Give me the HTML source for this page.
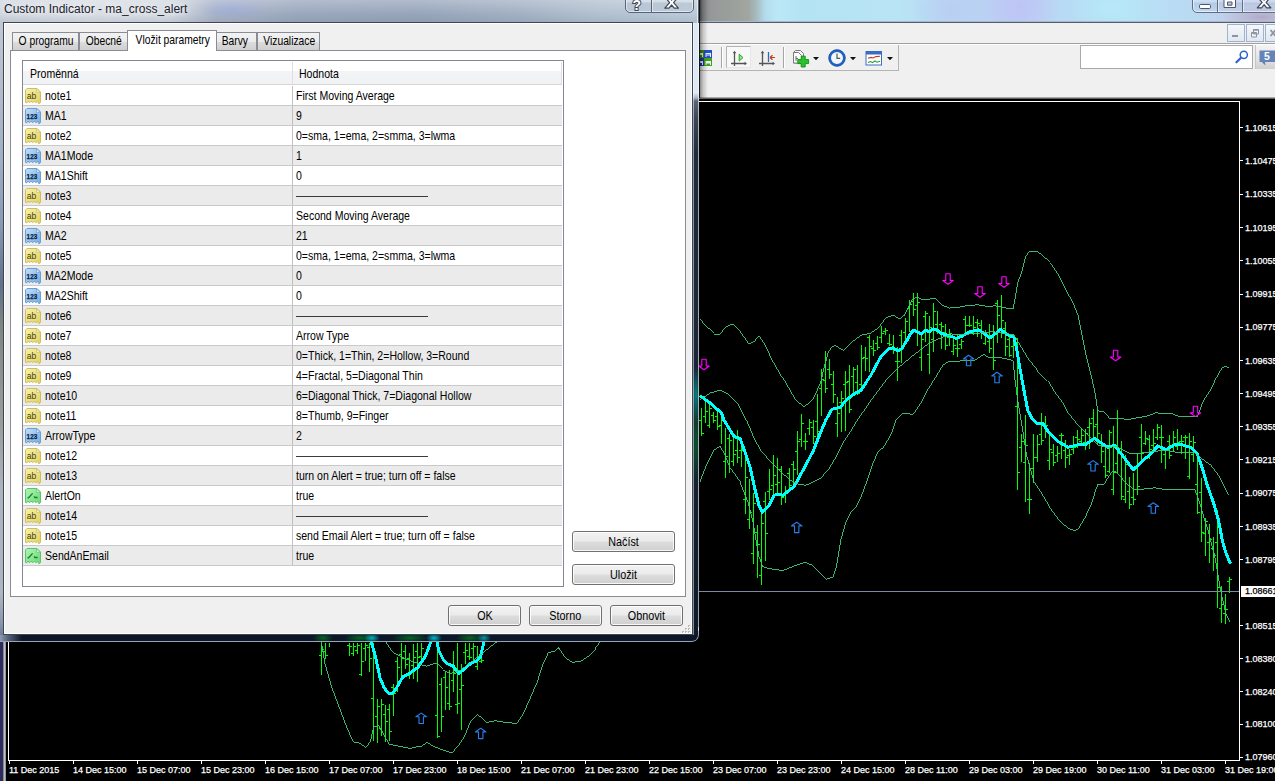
<!DOCTYPE html>
<html><head><meta charset="utf-8"><title>Custom Indicator - ma_cross_alert</title>
<style>
html,body{margin:0;padding:0;background:#000;}
html{overflow:hidden;width:1275px;height:781px;}
#root{position:absolute;left:0;top:0;width:1275px;height:781px;overflow:hidden;background:#000;}
body{width:1275px;height:781px;position:relative;overflow:hidden;font-family:"Liberation Sans",sans-serif;font-size:11px;color:#000;}
.abs{position:absolute;}
.t{display:inline-block;font-size:12.4px;transform:scaleX(.85);transform-origin:0 50%;white-space:nowrap;letter-spacing:0;}
.tb{display:inline-block;font-size:12.4px;transform:scaleX(.87);transform-origin:50% 50%;white-space:nowrap;letter-spacing:0;}
.tc{display:inline-block;font-size:12.4px;transform:scaleX(.83);transform-origin:50% 50%;white-space:nowrap;letter-spacing:0;}
/* ---- main window chrome ---- */
#glass{left:0;top:0;width:1275px;height:22px;background:
 radial-gradient(ellipse 45px 12px at 1262px 17px,rgba(176,166,196,.9),rgba(176,166,196,0) 90%),
 radial-gradient(ellipse 50px 40px at 1020px 6px,rgba(190,196,246,.9),rgba(190,196,246,0) 80%),
 radial-gradient(ellipse 50px 40px at 950px 10px,rgba(186,204,242,.8),rgba(186,204,242,0) 80%),
 radial-gradient(ellipse 50px 30px at 1110px 8px,rgba(182,234,248,.9),rgba(182,234,248,0) 80%),
 linear-gradient(90deg,#5e5e5e 699px,#868989 702px,#969999 712px,#9a9f9b 730px,#a2a5a0 748px,#a8bcc2 757px,#b2dcec 765px,#bbe8f7 778px,#b4e3f4 800px,#b9e4f5 900px,#b8d6f3 960px,#bccdf3 1020px,#b8daf4 1060px,#b7e2f6 1130px,#badaf4 1190px,#c2cfea 1230px,#c6d0e8 1275px);}
#glassline{left:0;top:21px;width:1275px;height:2px;background:linear-gradient(#a6b8cc 0,#a6b8cc 1px,#565d6b 1px,#565d6b 2px);}
#menubar{left:0;top:23px;width:1275px;height:20px;background:#f0f0f0;}
#tbarea{left:0;top:43px;width:1275px;height:54px;background:#f0f0f0;border-top:1px solid #a0a0a0;box-sizing:border-box;box-shadow:inset 0 1px 0 #fff;}
#tbline{left:699px;top:70px;width:200px;height:1px;background:#b5b5b5;}
#tbline2{left:898px;top:45px;width:1px;height:26px;background:#b5b5b5;}
#underbar{left:0;top:97px;width:1275px;height:2px;background:linear-gradient(#cfcfcf,#3a3a3a);}
#chartbg{left:0;top:99px;width:1275px;height:682px;background:#000;}
.chart{position:absolute;left:0;top:0;}
.pl{position:absolute;left:1245px;color:#fff;-webkit-text-stroke:.25px #fff;font-size:9px;line-height:12px;height:12px;white-space:nowrap;}
.dl{position:absolute;top:764px;color:#fff;-webkit-text-stroke:.25px #fff;font-size:9px;line-height:12px;white-space:nowrap;}
#bid{left:1241px;top:586px;width:34px;height:11px;background:#fff;color:#000;-webkit-text-stroke:.25px #000;font-size:9px;line-height:11px;padding-left:4px;box-sizing:border-box;white-space:nowrap;overflow:hidden;}
#lframe{left:0;top:99px;width:6px;height:682px;background:linear-gradient(90deg,#2c2c60 0,#2c2c60 3px,#8a8a8a 3.5px,#d8d8d8 5px,#555 6px);}
#dshadow{left:699px;top:0;width:9px;height:98px;background:linear-gradient(90deg,#161616 0,#161616 1px,rgba(0,0,0,.42) 1px,rgba(0,0,0,.18) 4px,rgba(0,0,0,0) 9px);}
/* caption buttons main */
#capbtn{left:1192px;top:-7px;width:100px;height:18px;border:1px solid #5e6f86;border-radius:0 0 5px 5px;box-shadow:inset 0 0 0 1px rgba(255,255,255,.55);background:linear-gradient(rgba(255,255,255,.45),rgba(255,255,255,.15) 45%,rgba(150,170,200,.25) 50%,rgba(200,215,235,.3));}
#capbtn i{position:absolute;top:0;width:1px;height:18px;background:#5e6f86;box-shadow:1px 0 0 rgba(255,255,255,.5);}
.mdi{position:absolute;top:24px;width:18px;height:18px;border:1px solid #9fb3cf;background:linear-gradient(#f4f7fb,#e1e8f2);box-sizing:border-box;}
#sbtn{left:1255px;top:45px;width:20px;height:24px;background:linear-gradient(#f4f4f4,#e2e2e2 60%,#cfcfcf);border-left:1px solid #c5c5c5;}
#search{left:1080px;top:45px;width:173px;height:24px;border:1px solid #a9a9a9;background:#fff;box-sizing:border-box;}
/* ---- dialog ---- */
#dlg{left:0;top:0;width:699px;height:642px;border-radius:0 0 7px 0;overflow:hidden;
 background:
 linear-gradient(90deg,rgba(0,0,0,0) 0,rgba(0,0,0,0) 100%),
 linear-gradient(#0b1626,#0b1626);}
#dtitle{left:0;top:0;width:699px;height:23px;background:
 radial-gradient(ellipse 45px 14px at 232px 8px,rgba(150,165,215,.7),rgba(150,165,215,0) 80%),
 linear-gradient(90deg,#cfd6df 0,#d9dee5 90px,#d3d9e2 170px,#aab5c8 215px,#9aa7bd 300px,#97a5bb 420px,#a3b1c4 520px,#b3c1d0 600px,#bccbd9 699px);}
#dtedge{left:697px;top:0;width:2px;height:23px;background:linear-gradient(90deg,#e4eaf1 0,#e4eaf1 1px,#596373 1px,#596373 2px);}
#dtitle:after{content:"";position:absolute;left:0;top:0;width:699px;height:23px;background:linear-gradient(rgba(255,255,255,.25),rgba(255,255,255,0) 60%,rgba(90,100,120,.15));}
#dtext{left:4px;top:2px;font-size:12px;line-height:15px;white-space:nowrap;color:#1c222c;text-shadow:0 0 6px rgba(255,255,255,.9),0 0 9px rgba(255,255,255,.8);letter-spacing:0px;}
#dleft{left:0;top:23px;width:3px;height:619px;background:linear-gradient(#bfc8d4 0,#b4bdca 60px,#a0adc2 140px,#8a9ab5 200px,#62708a 262px,#7d857f 300px,#8c9088 340px,#9a9c9a 400px,#aeb4be 470px,#b0b6c0 570px,#8a96aa 600px,#6f7f98 612px);}
#dright{left:693px;top:23px;width:6px;height:612px;background:
 radial-gradient(ellipse 5px 28px at 3px 372px,rgba(0,170,160,.7),rgba(0,170,160,0)),
 radial-gradient(ellipse 5px 40px at 3px 420px,rgba(0,120,40,.6),rgba(0,120,40,0)),
 linear-gradient(#dfe9f5 0,#dfe8f5 70px,#a9b3c2 75px,#5b6678 78px,#3b4759 95px,#1f2c3c 130px,#1a2838 300px,#0d1a2a 612px);box-shadow:inset 1px 0 0 rgba(255,255,255,.5);}
#drl{left:698px;top:23px;width:1px;height:608px;background:rgba(255,255,255,.6);}
#dbl{left:0;top:641px;width:688px;height:1px;background:#9aa3b3;}
#dcorner{left:684px;top:627px;width:15px;height:15px;box-sizing:border-box;border-right:1px solid rgba(255,255,255,.6);border-bottom:1px solid #9aa3b3;border-radius:0 0 7px 0;}
#dbot{left:0;top:635px;width:699px;height:7px;background:
 radial-gradient(ellipse 8px 5px at 372px 3px,rgba(0,205,220,.85),rgba(0,205,220,0)),
 radial-gradient(ellipse 8px 5px at 434px 3px,rgba(0,205,220,.9),rgba(0,205,220,0)),
 radial-gradient(ellipse 7px 5px at 484px 3px,rgba(0,205,220,.7),rgba(0,205,220,0)),
 radial-gradient(ellipse 10px 5px at 323px 3px,rgba(0,150,30,.6),rgba(0,150,30,0)),
 radial-gradient(ellipse 16px 5px at 360px 3px,rgba(0,150,30,.6),rgba(0,150,30,0)),
 radial-gradient(ellipse 18px 5px at 410px 3px,rgba(0,150,30,.6),rgba(0,150,30,0)),
 radial-gradient(ellipse 14px 5px at 470px 3px,rgba(0,150,30,.6),rgba(0,150,30,0)),
 linear-gradient(90deg,#8f9bb0 0,#55627a 8px,#0c1828 22px,#0c1828 100%);
}
#client{left:3px;top:22px;width:690px;height:613px;box-sizing:border-box;border:1px solid #3d4656;background:#f0f0f0;box-shadow:inset 0 0 0 1px #fff;}
#dcap{left:625px;top:-7px;width:67px;height:18px;border:1px solid #56637a;border-radius:0 0 5px 5px;box-shadow:inset 0 0 0 1px rgba(255,255,255,.55);background:linear-gradient(rgba(255,255,255,.5),rgba(255,255,255,.2) 45%,rgba(140,155,180,.2) 50%,rgba(190,200,220,.25));}
#dcap i{position:absolute;left:25px;top:0;width:1px;height:18px;background:#56637a;box-shadow:1px 0 0 rgba(255,255,255,.5);}
/* tabs */
.tab{position:absolute;top:32px;height:18px;box-sizing:border-box;border:1px solid #898c95;border-bottom:none;background:linear-gradient(#f2f2f2 0,#ebebeb 50%,#dddddd 50%,#cfcfcf 100%);line-height:17px;text-align:center;white-space:nowrap;}
.tab.act{top:30px;height:21px;background:#fff;line-height:19px;z-index:2;}
#panel{left:10px;top:50px;width:676px;height:547px;box-sizing:border-box;border:1px solid #898c95;background:#fff;}
#list{left:22px;top:60px;width:542px;height:527px;box-sizing:border-box;border:1px solid #828790;background:#fff;overflow:hidden;}
#hdr{position:absolute;left:0;top:0;width:539px;height:23px;background:linear-gradient(#fff 0,#fff 10px,#f3f4f6 10px,#f1f2f4 23px);border-bottom:1px solid #d5d5d5;}
#hdr span{position:absolute;top:6px;line-height:15px;}
#hdr i{position:absolute;left:269px;top:1px;width:1px;height:22px;background:#dedfe1;}
#hdr b{position:absolute;left:538px;top:1px;width:1px;height:22px;background:#dedfe1;}
.row{position:absolute;left:0;width:539px;height:19px;border-bottom:1px solid #c9c9c9;background:#fff;}
.row.g{background:#ebebeb;}
.row .ic{position:absolute;left:2px;top:2px;}
.row .nm{position:absolute;left:21.5px;top:3px;line-height:15px;}
.row .vl{position:absolute;left:272.5px;top:3px;line-height:15px;}
.row .dv{position:absolute;left:269px;top:0;width:1px;height:19px;background:#c0c0c0;}
.dash{position:absolute;left:273px;top:10px;width:132px;height:1px;background:#3c3c3c;}
.btn{position:absolute;box-sizing:border-box;border:1px solid #707070;border-radius:3px;background:linear-gradient(#f2f2f2 0,#ebebeb 48%,#dddddd 52%,#cfcfcf 100%);box-shadow:inset 0 0 0 1px rgba(255,255,255,.85);text-align:center;line-height:21px;height:21px;font-size:11px;}
</style></head>
<body>
<div id="root">
<svg width="0" height="0" style="position:absolute">
<defs>
<linearGradient id="gy" x1="0" y1="0" x2="1" y2="1"><stop offset="0" stop-color="#f8f3ae"/><stop offset="1" stop-color="#e0d062"/></linearGradient>
<linearGradient id="gb" x1="0" y1="0" x2="1" y2="1"><stop offset="0" stop-color="#c2e0f9"/><stop offset="1" stop-color="#70aae0"/></linearGradient>
<linearGradient id="gg" x1="0" y1="0" x2="1" y2="1"><stop offset="0" stop-color="#b2f6b8"/><stop offset="1" stop-color="#66d874"/></linearGradient>
<symbol id="paper" viewBox="0 0 16 16"><path d="M2,0.5 H12 L15.5,4 V14.6 L14,15.8 L12.4,13.2 L10.9,14.8 L9.3,13 L7.7,14.8 L6.1,13 L4.5,14.8 L3,13 L1.6,15 L0.5,14.4 V2 Z"/></symbol>
<symbol id="i-ab" viewBox="0 0 16 16"><use href="#paper" fill="url(#gy)" stroke="#cdbf60" stroke-width="1"/><path d="M11.6,0.8 V4.4 H15.2 Z" fill="#fcf9d4" stroke="#cdbf60" stroke-width=".7"/><text x="1.8" y="10.7" font-family="Liberation Sans, sans-serif" font-size="9" fill="#453f00" textLength="9.6" lengthAdjust="spacingAndGlyphs">ab</text></symbol>
<symbol id="i-n" viewBox="0 0 16 16"><use href="#paper" fill="url(#gb)" stroke="#6a9ed4" stroke-width="1"/><path d="M11.6,0.8 V4.4 H15.2 Z" fill="#def0fd" stroke="#6a9ed4" stroke-width=".7"/><text x="1.6" y="10.9" font-family="Liberation Sans, sans-serif" font-size="7.2" font-weight="bold" fill="#0b2447" stroke="#0b2447" stroke-width=".25" textLength="10.6" lengthAdjust="spacingAndGlyphs">123</text></symbol>
<symbol id="i-b" viewBox="0 0 16 16"><use href="#paper" fill="url(#gg)" stroke="#5cc468" stroke-width="1"/><path d="M11.6,0.8 V4.4 H15.2 Z" fill="#dcfbe0" stroke="#5cc468" stroke-width=".7"/><path d="M2.4,9.8 H3.6 L7.6,5.4 M9,8.4 L10,9.5 H12.6" stroke="#14802a" stroke-width="1.3" fill="none" stroke-linejoin="round"/></symbol>
</defs></svg>

<!-- main window chrome -->
<div id="glass" class="abs"></div>
<div id="glassline" class="abs"></div>
<div id="capbtn" class="abs"><i style="left:24px"></i><i style="left:49px"></i></div>
<div id="menubar" class="abs"></div>
<div id="tbarea" class="abs"></div>
<div id="tbline" class="abs"></div><div id="tbline2" class="abs"></div>
<div id="underbar" class="abs"></div>
<div id="chartbg" class="abs"></div>
<svg class="chart" width="1275" height="781" viewBox="0 0 1275 781">
<path d="M321.5,643 V675 M321,655.5 h-2 M322,649.5 h2 M325.5,643 V659 M325,651.5 h-2 M326,655.5 h2 M329.5,643 V647 M349.5,643 V656 M349,645.5 h-2 M350,646.5 h2 M353.5,643 V656 M353,653.5 h-2 M354,646.5 h2 M357.5,643 V654 M357,650.5 h-2 M358,645.5 h2 M361.5,643 V676 M361,674.5 h-2 M362,661.5 h2 M365.5,643 V661 M365,648.5 h-2 M366,645.5 h2 M369.5,643 V672 M369,647.5 h-2 M370,658.5 h2 M373.5,643 V741 M373,698.5 h-2 M374,653.5 h2 M377.5,699 V743 M377,716.5 h-2 M378,706.5 h2 M381.5,699 V736 M381,728.5 h-2 M382,704.5 h2 M385.5,705 V742 M385,714.5 h-2 M386,721.5 h2 M389.5,704 V741 M389,709.5 h-2 M390,731.5 h2 M393.5,684 V716 M393,687.5 h-2 M394,693.5 h2 M397.5,657 V692 M397,661.5 h-2 M398,667.5 h2 M401.5,643 V677 M401,654.5 h-2 M402,658.5 h2 M405.5,645 V669 M405,651.5 h-2 M406,664.5 h2 M409.5,653 V679 M409,658.5 h-2 M410,673.5 h2 M413.5,644 V679 M413,665.5 h-2 M414,657.5 h2 M417.5,643 V682 M417,651.5 h-2 M418,657.5 h2 M421.5,643 V664 M421,656.5 h-2 M422,648.5 h2 M437.5,643 V738 M437,715.5 h-2 M438,736.5 h2 M441.5,678 V732 M441,684.5 h-2 M442,716.5 h2 M445.5,672 V710 M445,677.5 h-2 M446,687.5 h2 M449.5,670 V710 M449,703.5 h-2 M450,706.5 h2 M453.5,651 V692 M453,680.5 h-2 M454,673.5 h2 M457.5,643 V714 M457,704.5 h-2 M458,703.5 h2 M461.5,664 V730 M461,689.5 h-2 M462,685.5 h2 M465.5,643 V664 M465,652.5 h-2 M466,650.5 h2 M469.5,643 V660 M469,656.5 h-2 M470,657.5 h2 M473.5,643 V661 M473,648.5 h-2 M474,646.5 h2 M477.5,646 V670 M477,666.5 h-2 M478,657.5 h2 M481.5,651 V663 M481,661.5 h-2 M482,660.5 h2 M701.5,408 V436 M701,420.5 h-2 M702,433.5 h2 M705.5,400 V423 M705,416.5 h-2 M706,411.5 h2 M709.5,404 V428 M709,425.5 h-2 M710,408.5 h2 M713.5,412 V423 M713,415.5 h-2 M714,420.5 h2 M717.5,412 V430 M717,416.5 h-2 M718,426.5 h2 M721.5,413 V444 M721,425.5 h-2 M722,419.5 h2 M725.5,428 V478 M725,461.5 h-2 M726,456.5 h2 M729.5,434 V473 M729,438.5 h-2 M730,440.5 h2 M733.5,435 V466 M733,461.5 h-2 M734,454.5 h2 M737.5,430 V463 M737,450.5 h-2 M738,457.5 h2 M741.5,438 V467 M741,450.5 h-2 M742,450.5 h2 M745.5,453 V514 M745,499.5 h-2 M746,477.5 h2 M749.5,479 V529 M749,519.5 h-2 M750,512.5 h2 M753.5,493 V564 M753,553.5 h-2 M754,503.5 h2 M757.5,525 V578 M757,532.5 h-2 M758,544.5 h2 M761.5,513 V585 M761,575.5 h-2 M762,523.5 h2 M765.5,492 V561 M765,501.5 h-2 M766,533.5 h2 M769.5,469 V500 M769,491.5 h-2 M770,489.5 h2 M773.5,455 V495 M773,485.5 h-2 M774,475.5 h2 M777.5,458 V494 M777,484.5 h-2 M778,482.5 h2 M781.5,466 V505 M781,469.5 h-2 M782,497.5 h2 M785.5,486 V503 M785,493.5 h-2 M786,490.5 h2 M789.5,468 V490 M789,473.5 h-2 M790,485.5 h2 M793.5,461 V486 M793,464.5 h-2 M794,469.5 h2 M797.5,431 V475 M797,451.5 h-2 M798,441.5 h2 M801.5,414 V447 M801,439.5 h-2 M802,423.5 h2 M805.5,433 V450 M805,441.5 h-2 M806,441.5 h2 M809.5,419 V435 M809,428.5 h-2 M810,422.5 h2 M813.5,420 V444 M813,427.5 h-2 M814,436.5 h2 M817.5,394 V438 M817,421.5 h-2 M818,431.5 h2 M821.5,369 V416 M821,388.5 h-2 M822,379.5 h2 M825.5,351 V393 M825,380.5 h-2 M826,388.5 h2 M829.5,359 V379 M829,369.5 h-2 M830,374.5 h2 M833.5,371 V403 M833,384.5 h-2 M834,394.5 h2 M837.5,397 V437 M837,423.5 h-2 M838,413.5 h2 M841.5,391 V432 M841,402.5 h-2 M842,398.5 h2 M845.5,371 V431 M845,384.5 h-2 M846,382.5 h2 M849.5,365 V413 M849,381.5 h-2 M850,409.5 h2 M853.5,367 V393 M853,376.5 h-2 M854,369.5 h2 M857.5,365 V395 M857,382.5 h-2 M858,393.5 h2 M861.5,345 V390 M861,384.5 h-2 M862,358.5 h2 M865.5,347 V371 M865,357.5 h-2 M866,358.5 h2 M869.5,335 V372 M869,337.5 h-2 M870,346.5 h2 M873.5,340 V356 M873,348.5 h-2 M874,350.5 h2 M877.5,336 V350 M877,343.5 h-2 M878,347.5 h2 M881.5,326 V343 M881,337.5 h-2 M882,333.5 h2 M885.5,328 V335 M885,331.5 h-2 M886,330.5 h2 M889.5,334 V346 M889,343.5 h-2 M890,344.5 h2 M893.5,335 V354 M893,349.5 h-2 M894,349.5 h2 M897.5,347 V381 M897,361.5 h-2 M898,361.5 h2 M901.5,330 V363 M901,335.5 h-2 M902,347.5 h2 M905.5,318 V341 M905,332.5 h-2 M906,321.5 h2 M909.5,300 V332 M909,308.5 h-2 M910,304.5 h2 M913.5,293 V316 M913,301.5 h-2 M914,309.5 h2 M917.5,293 V346 M917,305.5 h-2 M918,302.5 h2 M921.5,334 V371 M921,357.5 h-2 M922,339.5 h2 M925.5,311 V342 M925,316.5 h-2 M926,313.5 h2 M929.5,316 V374 M929,354.5 h-2 M930,327.5 h2 M933.5,303 V352 M933,339.5 h-2 M934,311.5 h2 M937.5,311 V334 M937,324.5 h-2 M938,332.5 h2 M941.5,322 V349 M941,324.5 h-2 M942,326.5 h2 M945.5,324 V350 M945,332.5 h-2 M946,345.5 h2 M949.5,329 V346 M949,337.5 h-2 M950,333.5 h2 M953.5,339 V355 M953,351.5 h-2 M954,345.5 h2 M957.5,335 V357 M957,348.5 h-2 M958,348.5 h2 M961.5,339 V349 M961,344.5 h-2 M962,341.5 h2 M965.5,316 V332 M965,319.5 h-2 M966,325.5 h2 M969.5,316 V327 M969,325.5 h-2 M970,325.5 h2 M973.5,316 V335 M973,333.5 h-2 M974,327.5 h2 M977.5,319 V337 M977,322.5 h-2 M978,323.5 h2 M981.5,320 V339 M981,325.5 h-2 M982,332.5 h2 M985.5,330 V345 M985,343.5 h-2 M986,336.5 h2 M989.5,324 V353 M989,341.5 h-2 M990,348.5 h2 M993.5,325 V370 M993,337.5 h-2 M994,360.5 h2 M997.5,300 V343 M997,303.5 h-2 M998,315.5 h2 M1001.5,295 V338 M1001,330.5 h-2 M1002,320.5 h2 M1005.5,322 V356 M1005,328.5 h-2 M1006,346.5 h2 M1009.5,337 V357 M1009,339.5 h-2 M1010,355.5 h2 M1013.5,335 V358 M1013,346.5 h-2 M1014,339.5 h2 M1017.5,338 V490 M1017,406.5 h-2 M1018,472.5 h2 M1021.5,434 V462 M1021,447.5 h-2 M1022,441.5 h2 M1025.5,415 V502 M1025,462.5 h-2 M1026,445.5 h2 M1029.5,463 V514 M1029,499.5 h-2 M1030,499.5 h2 M1033.5,434 V483 M1033,468.5 h-2 M1034,457.5 h2 M1037.5,435 V462 M1037,457.5 h-2 M1038,444.5 h2 M1041.5,413 V445 M1041,434.5 h-2 M1042,440.5 h2 M1045.5,416 V438 M1045,424.5 h-2 M1046,425.5 h2 M1049.5,433 V470 M1049,460.5 h-2 M1050,449.5 h2 M1053.5,444 V466 M1053,452.5 h-2 M1054,462.5 h2 M1057.5,446 V462 M1057,455.5 h-2 M1058,453.5 h2 M1061.5,433 V459 M1061,435.5 h-2 M1062,435.5 h2 M1065.5,440 V468 M1065,450.5 h-2 M1066,457.5 h2 M1069.5,449 V465 M1069,455.5 h-2 M1070,454.5 h2 M1073.5,436 V454 M1073,449.5 h-2 M1074,447.5 h2 M1077.5,430 V448 M1077,437.5 h-2 M1078,439.5 h2 M1081.5,428 V443 M1081,441.5 h-2 M1082,435.5 h2 M1085.5,429 V450 M1085,442.5 h-2 M1086,433.5 h2 M1089.5,418 V449 M1089,427.5 h-2 M1090,423.5 h2 M1093.5,409 V438 M1093,418.5 h-2 M1094,426.5 h2 M1097.5,410 V445 M1097,424.5 h-2 M1098,433.5 h2 M1101.5,434 V463 M1101,442.5 h-2 M1102,451.5 h2 M1105.5,445 V478 M1105,466.5 h-2 M1106,475.5 h2 M1109.5,430 V473 M1109,471.5 h-2 M1110,432.5 h2 M1113.5,426 V495 M1113,489.5 h-2 M1114,472.5 h2 M1117.5,410 V473 M1117,463.5 h-2 M1118,453.5 h2 M1121.5,441 V500 M1121,448.5 h-2 M1122,496.5 h2 M1125.5,455 V503 M1125,499.5 h-2 M1126,464.5 h2 M1129.5,477 V509 M1129,491.5 h-2 M1130,504.5 h2 M1133.5,473 V505 M1133,497.5 h-2 M1134,499.5 h2 M1137.5,454 V495 M1137,468.5 h-2 M1138,486.5 h2 M1141.5,424 V464 M1141,437.5 h-2 M1142,453.5 h2 M1145.5,431 V445 M1145,443.5 h-2 M1146,438.5 h2 M1149.5,435 V459 M1149,439.5 h-2 M1150,449.5 h2 M1153.5,429 V453 M1153,445.5 h-2 M1154,443.5 h2 M1157.5,424 V440 M1157,437.5 h-2 M1158,427.5 h2 M1161.5,425 V463 M1161,437.5 h-2 M1162,437.5 h2 M1165.5,448 V469 M1165,454.5 h-2 M1166,450.5 h2 M1169.5,435 V459 M1169,441.5 h-2 M1170,455.5 h2 M1173.5,431 V452 M1173,447.5 h-2 M1174,437.5 h2 M1177.5,429 V450 M1177,446.5 h-2 M1178,442.5 h2 M1181.5,435 V454 M1181,441.5 h-2 M1182,441.5 h2 M1185.5,435 V459 M1185,437.5 h-2 M1186,437.5 h2 M1189.5,433 V479 M1189,476.5 h-2 M1190,441.5 h2 M1193.5,436 V462 M1193,454.5 h-2 M1194,442.5 h2 M1197.5,455 V514 M1197,484.5 h-2 M1198,512.5 h2 M1201.5,478 V542 M1201,492.5 h-2 M1202,532.5 h2 M1205.5,518 V556 M1205,533.5 h-2 M1206,521.5 h2 M1209.5,524 V563 M1209,542.5 h-2 M1210,539.5 h2 M1213.5,537 V571 M1213,548.5 h-2 M1214,555.5 h2 M1217.5,510 V608 M1217,542.5 h-2 M1218,587.5 h2 M1221.5,586 V623 M1221,608.5 h-2 M1222,604.5 h2 M1225.5,594 V624 M1225,613.5 h-2 M1226,609.5 h2 M1229.5,577 V593 M1229,581.5 h-2 M1230,579.5 h2" stroke="#00ff00" stroke-width="1" fill="none" shape-rendering="crispEdges"/>
<polyline points="700.0,395.6 710.0,403.0 721.4,413.0 723.9,420.0 733.9,436.3 740.2,438.8 745.2,452.6 750.2,467.7 755.2,490.3 759.0,505.3 762.3,512.4 769.0,505.3 774.0,495.3 777.8,494.0 782.9,495.3 794.1,486.5 803.0,470.2 813.0,451.4 820.5,432.5 825.5,420.7 831.8,409.4 840.6,407.0 845.6,400.6 855.6,393.0 860.7,390.6 870.7,375.5 880.7,357.0 888.6,348.7 893.2,347.8 897.9,351.0 901.9,348.4 907.0,340.3 911.1,332.9 914.0,330.0 917.4,332.0 921.5,334.0 925.5,330.3 929.0,331.7 933.6,328.8 937.6,330.6 941.0,333.4 944.5,334.3 950.0,335.7 956.0,338.4 962.5,335.9 970.0,331.6 978.8,329.9 990.0,337.8 1000.7,329.4 1007.7,334.9 1014.0,337.4 1016.5,347.9 1020.3,370.5 1024.0,390.6 1027.8,410.7 1032.8,419.5 1037.8,424.0 1042.9,423.8 1049.0,432.6 1057.9,441.4 1068.0,447.2 1078.0,444.7 1085.5,444.7 1094.3,438.4 1100.6,442.7 1108.0,447.2 1114.4,445.2 1123.2,456.5 1133.2,469.8 1143.3,460.2 1150.8,454.0 1157.8,445.9 1165.8,449.7 1174.6,444.7 1182.2,444.7 1191.0,447.7 1197.2,454.0 1202.2,467.8 1207.3,485.3 1213.5,502.9 1218.6,520.5 1222.3,540.6 1226.0,553.1 1230.4,563.7" stroke="#00ffff" stroke-width="3" fill="none" stroke-linejoin="round" stroke-linecap="butt" shape-rendering="crispEdges"/>
<polyline points="370.8,640.0 375.3,656.0 380.1,678.2 384.4,688.2 388.7,693.2 391.6,693.9 395.2,690.4 399.5,682.5 403.0,676.7 408.8,673.9 418.0,667.4 425.5,656.0 431.5,640.0" stroke="#00ffff" stroke-width="3" fill="none" stroke-linejoin="round" stroke-linecap="butt" shape-rendering="crispEdges"/>
<polyline points="436.6,640.0 438.9,650.9 443.2,659.5 447.5,663.8 453.3,666.0 456.8,671.7 459.0,673.1 461.9,671.0 467.6,666.0 471.9,662.4 476.2,661.7 480.5,656.6 484.5,640.0" stroke="#00ffff" stroke-width="3" fill="none" stroke-linejoin="round" stroke-linecap="butt" shape-rendering="crispEdges"/>
<polyline points="700.0,319.0 707.5,328.0 714.0,334.0 720.0,334.0 726.0,326.6 732.6,324.0 739.0,330.0 749.0,344.0 754.0,341.7 759.0,336.0 764.0,343.0 770.0,355.5 783.0,378.0 795.4,399.4 804.0,407.0 813.0,399.4 820.5,383.0 824.0,368.0 828.0,353.0 832.0,346.7 835.6,345.4 840.6,349.0 844.0,350.4 850.6,343.0 860.7,335.4 870.7,333.0 878.0,328.0 882.0,323.0 885.8,318.0 893.0,315.0 899.6,319.0 904.6,315.0 908.0,308.0 912.0,300.0 916.0,297.0 921.0,299.0 927.0,300.0 933.5,298.0 939.7,303.0 943.5,306.0 948.5,308.0 958.5,307.0 965.0,305.8 977.6,304.8 987.6,306.5 995.0,305.8 1005.0,307.8 1013.2,309.0 1015.2,297.7 1017.7,282.7 1021.5,272.6 1025.3,257.6 1029.0,251.8 1036.6,251.3 1042.9,255.6 1050.4,262.6 1057.9,273.9 1065.4,289.0 1073.0,302.8 1078.0,315.3 1080.5,327.9 1085.5,353.0 1091.8,378.0 1095.6,395.6 1097.6,410.7 1104.3,412.0 1109.4,418.2 1118.2,418.2 1128.2,419.5 1138.2,417.7 1148.3,415.7 1155.8,412.7 1163.3,414.0 1170.9,413.2 1178.4,416.2 1188.4,416.2 1197.2,417.0 1203.5,400.6 1211.0,389.4 1216.0,378.0 1221.0,368.5 1225.6,366.3 1228.6,367.5" stroke="#44c97f" stroke-width="0.9" fill="none" shape-rendering="crispEdges"/>
<polyline points="700.0,400.0 710.4,393.0 720.6,390.0 728.0,394.0 738.5,404.5 746.5,420.0 752.7,435.0 760.3,450.0 770.3,461.4 780.3,471.5 790.4,480.2 798.0,484.0 805.4,485.3 813.0,482.2 820.5,478.2 828.0,470.2 835.6,457.6 843.0,442.6 850.6,431.3 855.6,423.0 870.7,400.6 885.8,380.6 898.0,368.0 913.0,355.5 928.0,344.0 943.5,336.6 956.0,334.0 967.5,334.0 980.0,332.9 992.7,331.6 1005.0,333.4 1014.0,334.9 1020.3,345.4 1027.8,358.0 1037.8,370.5 1047.9,380.6 1055.4,393.0 1063.0,403.0 1068.0,412.6 1078.0,425.0 1088.0,435.0 1098.0,445.2 1108.0,447.7 1115.6,446.4 1123.2,450.2 1130.7,454.0 1140.7,453.2 1153.3,451.5 1165.8,450.2 1175.9,452.2 1186.0,452.7 1194.7,452.7 1202.2,459.0 1211.0,465.3 1218.6,475.3 1223.6,485.3 1228.6,494.9" stroke="#44c97f" stroke-width="0.9" fill="none" shape-rendering="crispEdges"/>
<polyline points="700.0,481.5 707.5,462.7 713.8,450.1 720.0,446.4 723.9,452.6 730.0,467.7 740.2,481.5 747.7,500.3 752.7,520.4 756.5,543.0 759.0,556.8 762.8,566.8 770.3,568.8 782.9,570.6 795.4,565.6 805.4,562.3 813.0,565.6 820.5,573.1 826.0,579.4 833.0,576.9 836.0,568.0 840.6,540.5 845.6,522.9 850.6,512.9 855.6,507.9 860.7,497.8 868.2,477.7 873.2,462.7 878.2,451.4 883.3,447.6 890.8,435.0 895.8,420.7 903.0,413.0 913.0,414.4 921.0,403.0 928.4,388.0 936.0,375.5 942.0,365.5 948.5,361.7 958.5,361.0 965.0,360.5 975.0,360.0 983.9,354.2 988.9,358.0 1000.0,357.5 1013.2,360.5 1015.2,380.6 1017.7,400.0 1021.5,422.6 1026.5,455.2 1034.0,481.6 1042.9,495.4 1051.6,510.4 1060.4,521.7 1068.0,528.0 1074.2,530.5 1078.0,529.3 1085.5,516.7 1091.8,502.9 1095.6,490.4 1098.0,484.0 1104.3,484.0 1109.4,475.3 1113.6,470.3 1119.4,475.3 1125.7,482.8 1133.2,489.1 1143.3,489.1 1154.5,487.9 1165.8,489.9 1175.9,489.9 1186.0,489.1 1194.7,489.1 1198.5,499.1 1203.5,515.5 1208.5,530.5 1213.5,550.6 1217.0,568.5 1221.6,594.7 1225.7,613.0 1229.8,622.3" stroke="#44c97f" stroke-width="0.9" fill="none" shape-rendering="crispEdges"/>
<polyline points="321.3,642.0 325.0,663.6 331.4,686.2 338.9,706.3 346.4,726.4 353.2,741.9 359.0,742.7 365.8,747.7 370.3,741.4 374.0,726.4 379.0,725.9 384.0,735.0 389.0,744.0 397.9,746.0 410.4,748.5 420.5,746.0 426.8,742.0 433.0,746.0 443.0,750.2 451.9,752.7 458.0,746.4 464.4,736.4 470.7,721.3 477.0,714.6 482.0,717.6 487.0,722.6 494.5,720.8 505.8,722.6 517.0,723.3 523.4,713.8 531.0,696.2 537.2,682.4 542.2,666.0 548.5,652.3 553.5,651.0 558.5,647.3 564.8,657.3 572.3,662.4 581.0,661.0 588.7,656.0 595.0,648.5 600.0,642.0" stroke="#44c97f" stroke-width="0.9" fill="none" shape-rendering="crispEdges"/>
<polyline points="385.0,641.0 392.9,652.3 405.4,658.6 418.0,663.6 425.5,666.0 435.5,663.0 443.0,670.0 450.6,673.7 460.6,670.0 470.7,662.4 480.7,654.8 488.3,648.5 496.5,642.0" stroke="#44c97f" stroke-width="0.9" fill="none" shape-rendering="crispEdges"/>
<path d="M701.8,359.3 h4.4 v6.7 h3.1 l-5.3,3.7 l-5.3,-3.7 h3.1 z" stroke="#ff00ff" stroke-width="1.1" fill="none" stroke-linejoin="round"/>
<path d="M945.8,273.8 h4.4 v6.7 h3.1 l-5.3,3.7 l-5.3,-3.7 h3.1 z" stroke="#ff00ff" stroke-width="1.1" fill="none" stroke-linejoin="round"/>
<path d="M977.8,286.8 h4.4 v6.7 h3.1 l-5.3,3.7 l-5.3,-3.7 h3.1 z" stroke="#ff00ff" stroke-width="1.1" fill="none" stroke-linejoin="round"/>
<path d="M1001.8,276.8 h4.4 v6.7 h3.1 l-5.3,3.7 l-5.3,-3.7 h3.1 z" stroke="#ff00ff" stroke-width="1.1" fill="none" stroke-linejoin="round"/>
<path d="M1113.4,350.3 h4.4 v6.7 h3.1 l-5.3,3.7 l-5.3,-3.7 h3.1 z" stroke="#ff00ff" stroke-width="1.1" fill="none" stroke-linejoin="round"/>
<path d="M1193.3,406.2 h4.4 v6.7 h3.1 l-5.3,3.7 l-5.3,-3.7 h3.1 z" stroke="#ff00ff" stroke-width="1.1" fill="none" stroke-linejoin="round"/>
<path d="M966.4,365.7 h4.4 v-6.7 h3.1 l-5.3,-3.7 l-5.3,3.7 h3.1 z" stroke="#2580ee" stroke-width="1.1" fill="none" stroke-linejoin="round"/>
<path d="M994.8,382.7 h4.4 v-6.7 h3.1 l-5.3,-3.7 l-5.3,3.7 h3.1 z" stroke="#2580ee" stroke-width="1.1" fill="none" stroke-linejoin="round"/>
<path d="M794.5,532.6 h4.4 v-6.7 h3.1 l-5.3,-3.7 l-5.3,3.7 h3.1 z" stroke="#2580ee" stroke-width="1.1" fill="none" stroke-linejoin="round"/>
<path d="M1090.8,471.0 h4.4 v-6.7 h3.1 l-5.3,-3.7 l-5.3,3.7 h3.1 z" stroke="#2580ee" stroke-width="1.1" fill="none" stroke-linejoin="round"/>
<path d="M1151.1,513.2 h4.4 v-6.7 h3.1 l-5.3,-3.7 l-5.3,3.7 h3.1 z" stroke="#2580ee" stroke-width="1.1" fill="none" stroke-linejoin="round"/>
<path d="M419.0,723.5 h4.4 v-6.7 h3.1 l-5.3,-3.7 l-5.3,3.7 h3.1 z" stroke="#2580ee" stroke-width="1.1" fill="none" stroke-linejoin="round"/>
<path d="M478.5,738.6 h4.4 v-6.7 h3.1 l-5.3,-3.7 l-5.3,3.7 h3.1 z" stroke="#2580ee" stroke-width="1.1" fill="none" stroke-linejoin="round"/>
<path d="M9,591.5 H1240" stroke="#7b8aa0" stroke-width="1" shape-rendering="crispEdges"/>
<path d="M8.5,101 V760.5 H1240 M8,101.5 H1239.5 V761" stroke="#fff" stroke-width="1" fill="none" shape-rendering="crispEdges"/>
<path d="M9.5,761 v3 M73.5,761 v3 M137.5,761 v3 M201.5,761 v3 M265.5,761 v3 M329.5,761 v3 M393.5,761 v3 M457.5,761 v3 M521.5,761 v3 M585.5,761 v3 M649.5,761 v3 M713.5,761 v3 M777.5,761 v3 M841.5,761 v3 M905.5,761 v3 M969.5,761 v3 M1033.5,761 v3 M1097.5,761 v3 M1161.5,761 v3 M1225.5,761 v3 M1240,127.5 h3 M1240,160.5 h3 M1240,194.5 h3 M1240,227.5 h3 M1240,260.5 h3 M1240,294.5 h3 M1240,327.5 h3 M1240,360.5 h3 M1240,393.5 h3 M1240,426.5 h3 M1240,459.5 h3 M1240,493.5 h3 M1240,526.5 h3 M1240,559.5 h3 M1240,625.5 h3 M1240,658.5 h3 M1240,691.5 h3 M1240,724.5 h3 M1240,757.5 h3" stroke="#fff" stroke-width="1" shape-rendering="crispEdges"/>
</svg>
<div class="pl" style="top:121.7px">1.10615</div><div class="pl" style="top:155.0px">1.10475</div><div class="pl" style="top:188.3px">1.10335</div><div class="pl" style="top:221.6px">1.10195</div><div class="pl" style="top:254.8px">1.10055</div><div class="pl" style="top:288.0px">1.09915</div><div class="pl" style="top:321.4px">1.09775</div><div class="pl" style="top:354.7px">1.09635</div><div class="pl" style="top:387.9px">1.09495</div><div class="pl" style="top:421.0px">1.09355</div><div class="pl" style="top:453.9px">1.09215</div><div class="pl" style="top:487.4px">1.09075</div><div class="pl" style="top:520.5px">1.08935</div><div class="pl" style="top:553.6px">1.08795</div><div class="pl" style="top:619.6px">1.08515</div><div class="pl" style="top:652.6px">1.08380</div><div class="pl" style="top:685.6px">1.08240</div><div class="pl" style="top:718.4px">1.08100</div><div class="pl" style="top:751.3px">1.07960</div>
<div class="dl" style="left:9px">11 Dec 2015</div><div class="dl" style="left:73px">14 Dec 15:00</div><div class="dl" style="left:137px">15 Dec 07:00</div><div class="dl" style="left:201px">15 Dec 23:00</div><div class="dl" style="left:265px">16 Dec 15:00</div><div class="dl" style="left:329px">17 Dec 07:00</div><div class="dl" style="left:393px">17 Dec 23:00</div><div class="dl" style="left:457px">18 Dec 15:00</div><div class="dl" style="left:521px">21 Dec 07:00</div><div class="dl" style="left:585px">21 Dec 23:00</div><div class="dl" style="left:649px">22 Dec 15:00</div><div class="dl" style="left:713px">23 Dec 07:00</div><div class="dl" style="left:777px">23 Dec 23:00</div><div class="dl" style="left:841px">24 Dec 15:00</div><div class="dl" style="left:905px">28 Dec 11:00</div><div class="dl" style="left:969px">29 Dec 03:00</div><div class="dl" style="left:1033px">29 Dec 19:00</div><div class="dl" style="left:1097px">30 Dec 11:00</div><div class="dl" style="left:1161px">31 Dec 03:00</div><div class="dl" style="left:1225px">31 Dec 19:00</div>
<div id="bid" class="abs">1.08661</div>
<div id="lframe" class="abs"></div>
<div class="mdi" style="left:1227px"></div><div class="mdi" style="left:1246px"></div><div class="mdi" style="left:1265px"></div>
<div id="search" class="abs"></div>
<div id="sbtn" class="abs"></div>
<svg class="abs" style="left:0;top:0" width="1275" height="100" viewBox="0 0 1275 100">
<!-- main caption glyphs -->
<rect x="1199.5" y="4.5" width="11" height="4" rx="1.2" fill="#fff" stroke="#4a5568" stroke-width="1"/>
<path d="M1224,-2 h11.5 v9.5 h-11.5 z M1227.5,2 h4.5 v3.2 h-4.5 z" fill="#fff" fill-rule="evenodd" stroke="#4a5568" stroke-width="1"/>
<path d="M1257.5,-3 l4,0 l2.6,3.2 l2.6,-3.2 l4,0 l-4.6,5.4 l4.8,5.4 h-4.2 l-2.6,-3.1 l-2.6,3.1 h-4.2 l4.8,-5.4 z" fill="#fff" stroke="#3d4758" stroke-width="1.2" stroke-linejoin="round"/>
<!-- MDI glyphs -->
<rect x="1232" y="35" width="6" height="2" fill="#8d949e"/>
<path d="M1253.5,29.5 h5 v4.5 h-5 z M1251.5,32.5 h5 v4.5 h-5 z" fill="#f2f5fa" stroke="#8d949e" stroke-width="1"/>
<path d="M1253.5,30 h5 M1251.5,33 h5" stroke="#8d949e" stroke-width="1.6"/>
<path d="M1270.5,30 l5,6 M1270.5,36 l5,-6" stroke="#8d949e" stroke-width="1.8"/>
<!-- toolbar: grid icon -->
<rect x="693" y="50" width="11" height="8" fill="#3a8f1c"/><rect x="704" y="50" width="8" height="8" fill="#2451c8"/>
<rect x="693" y="58" width="11" height="8" fill="#1a3fa6"/><rect x="704" y="58" width="8" height="8" fill="#41a322"/>
<path d="M700,53 h3 v4 h-1 v-2 h-2z M705.5,53 h5.5 v4 h-1 v-1.5 h-3.5 v1.5 h-1z M700,61 h3 v4 h-1 v-2 h-2z M705.5,61 h5.5 v4 h-1 v-1.5 h-3.5 v1.5 h-1z" fill="#eef3fb"/>
<path d="M706.5,54.5 h3.5" stroke="#7f9fe6" stroke-width="1"/>
<!-- separators -->
<path d="M721.5,47 v21 M783.5,47 v21" stroke="#a5a5a5" stroke-width="1" shape-rendering="crispEdges"/>
<path d="M722.5,47 v21 M784.5,47 v21" stroke="#fff" stroke-width="1" shape-rendering="crispEdges"/>
<!-- pressed button -->
<rect x="726.5" y="46.5" width="24" height="21" fill="#f8f8f8" stroke="#e6e6e6" stroke-width="1"/>
<path d="M726.5,67.5 v-21 h24" fill="none" stroke="#b4b4b4" stroke-width="1"/>
<!-- icon1 auto scroll -->
<path d="M734.5,52 v14 M731,63.5 h15" stroke="#555" stroke-width="1.3" fill="none"/>
<path d="M734.5,50.8 l-1.8,2.4 h3.6z M747,63.5 l-2.4,-1.8 v3.6z" fill="#555"/>
<path d="M739.2,54.2 l3.8,3.4 l-3.8,3.4z" fill="#8fe88f" stroke="#2aa52a" stroke-width="1"/>
<!-- icon2 chart shift -->
<path d="M762.5,52 v14 M759,63.5 h15" stroke="#555" stroke-width="1.3" fill="none"/>
<path d="M762.5,50.8 l-1.8,2.4 h3.6z M775,63.5 l-2.4,-1.8 v3.6z" fill="#555"/>
<path d="M768.5,52 v10" stroke="#2a6fb5" stroke-width="1.3"/>
<path d="M770,57.5 h5 M770,57.5 l2.5,-2.3 M770,57.5 l2.5,2.3" stroke="#c0391b" stroke-width="1.2" fill="none"/>
<!-- icon3 indicators add -->
<path d="M795.5,50.5 h5 l3,3 v9.5 h-10 v-10.5 z" fill="#f4f4f4" stroke="#7a7a7a" stroke-width="1"/>
<path d="M793.5,52.5 h5 l3,3 v7.5 h-8 z" fill="#fdfdfd" stroke="#7a7a7a" stroke-width="1"/>
<path d="M796,56 v5 M796,58.5 h2" stroke="#666" stroke-width="1"/>
<path d="M801.2,56.2 h4 v3.4 h3.4 v4 h-3.4 v3.4 h-4 v-3.4 h-3.4 v-4 h3.4z" fill="#28c22c" stroke="#128a18" stroke-width=".9"/>
<path d="M813,57 h6 l-3,3.2z M850,57 h6 l-3,3.2z M887,57 h6 l-3,3.2z" fill="#111"/>
<!-- clock -->
<circle cx="837" cy="58" r="7.2" fill="#f3f6fb" stroke="#1f63c9" stroke-width="2.4"/>
<circle cx="837" cy="58" r="8.3" fill="none" stroke="#184a9e" stroke-width=".7"/>
<path d="M837,53.5 v4.8 h3.2" stroke="#555" stroke-width="1.2" fill="none"/>
<!-- template icon -->
<rect x="866" y="51.5" width="15.5" height="13.5" fill="#fff" stroke="#3b6cc4" stroke-width="1"/>
<rect x="866" y="51.5" width="15.5" height="3" fill="#3b6cc4"/>
<path d="M868,58.2 l3,-.8 l2,.6 l3,-1.4 l4,-.4" stroke="#c0391b" stroke-width="1.1" fill="none"/>
<path d="M868,62.6 l2.5,-1 l2,1 l2.5,-1.6 l2,1.2 l3,-1" stroke="#2a9d3a" stroke-width="1.1" fill="none"/>
<!-- magnifier -->
<circle cx="1243.8" cy="54.8" r="3.6" fill="#fff" stroke="#2d62d0" stroke-width="1.5"/>
<path d="M1241,57.8 l-4.6,4.4" stroke="#2d62d0" stroke-width="2.2" stroke-linecap="round"/>
<!-- chat bubble 5 -->
<path d="M1259.5,50.5 h16 v11.5 h-10.5 l0.5,3.5 l-3.8,-3.5 h-2.2 z" fill="#6583b7"/>
<text x="1264" y="60.3" font-family="Liberation Sans, sans-serif" font-size="10.5" font-weight="bold" fill="#fff">5</text>
</svg>

<div id="dshadow" class="abs"></div>
<!-- dialog -->
<div id="dlg" class="abs">
 <div id="dtitle" class="abs"></div>
 <div id="dtedge" class="abs"></div>
 <div id="dtext" class="abs">Custom Indicator - ma_cross_alert</div>
 <div id="dcap" class="abs"><i></i></div>
<svg class="abs" style="left:620px;top:0" width="80" height="14" viewBox="620 0 80 14">
<text x="632.6" y="9.6" font-family="Liberation Sans, sans-serif" font-size="14" font-weight="bold" fill="#fff" stroke="#3d4758" stroke-width="2" paint-order="stroke">?</text>
<path d="M665,-3 l4,0 l2.6,3.2 l2.6,-3.2 l4,0 l-4.6,5.6 l4.8,5.6 h-4.2 l-2.6,-3.2 l-2.6,3.2 h-4.2 l4.8,-5.6 z" fill="#fff" stroke="#3d4758" stroke-width="1.2" stroke-linejoin="round"/>
</svg>
 <div id="dleft" class="abs"></div>
 <div id="dright" class="abs"></div>
 <div id="dbot" class="abs"></div>
 <div id="drl" class="abs"></div><div id="dbl" class="abs"></div><div id="dcorner" class="abs"></div>
 <div id="client" class="abs"></div>
 <div class="tab" style="left:12px;width:67px"><span class="tc">O programu</span></div>
 <div class="tab" style="left:79px;width:49px"><span class="tc">Obecné</span></div>
 <div class="tab act" style="left:127px;width:90px;padding-right:2px"><span class="tc">Vložit parametry</span></div>
 <div class="tab" style="left:216px;width:41px;padding-right:4px"><span class="tc">Barvy</span></div>
 <div class="tab" style="left:257px;width:63px"><span class="tc">Vizualizace</span></div>
 <div id="panel" class="abs"></div>
 <div id="list" class="abs">
  <div id="hdr"><span class="t" style="left:7px">Proměnná</span><i></i><span class="t" style="left:276px">Hodnota</span><b></b></div>
  <div id="rows" style="position:absolute;left:0;top:25px;">
<div class="row " style="top:0px"><svg class="ic" width="16" height="16"><use href="#i-ab"/></svg><span class="nm t">note1</span><i class="dv"></i><span class="vl t">First Moving Average</span></div>
<div class="row g" style="top:20px"><svg class="ic" width="16" height="16"><use href="#i-n"/></svg><span class="nm t">MA1</span><i class="dv"></i><span class="vl t">9</span></div>
<div class="row " style="top:40px"><svg class="ic" width="16" height="16"><use href="#i-ab"/></svg><span class="nm t">note2</span><i class="dv"></i><span class="vl t">0=sma, 1=ema, 2=smma, 3=lwma</span></div>
<div class="row g" style="top:60px"><svg class="ic" width="16" height="16"><use href="#i-n"/></svg><span class="nm t">MA1Mode</span><i class="dv"></i><span class="vl t">1</span></div>
<div class="row " style="top:80px"><svg class="ic" width="16" height="16"><use href="#i-n"/></svg><span class="nm t">MA1Shift</span><i class="dv"></i><span class="vl t">0</span></div>
<div class="row g" style="top:100px"><svg class="ic" width="16" height="16"><use href="#i-ab"/></svg><span class="nm t">note3</span><i class="dv"></i><span class="dash"></span></div>
<div class="row " style="top:120px"><svg class="ic" width="16" height="16"><use href="#i-ab"/></svg><span class="nm t">note4</span><i class="dv"></i><span class="vl t">Second Moving Average</span></div>
<div class="row g" style="top:140px"><svg class="ic" width="16" height="16"><use href="#i-n"/></svg><span class="nm t">MA2</span><i class="dv"></i><span class="vl t">21</span></div>
<div class="row " style="top:160px"><svg class="ic" width="16" height="16"><use href="#i-ab"/></svg><span class="nm t">note5</span><i class="dv"></i><span class="vl t">0=sma, 1=ema, 2=smma, 3=lwma</span></div>
<div class="row g" style="top:180px"><svg class="ic" width="16" height="16"><use href="#i-n"/></svg><span class="nm t">MA2Mode</span><i class="dv"></i><span class="vl t">0</span></div>
<div class="row " style="top:200px"><svg class="ic" width="16" height="16"><use href="#i-n"/></svg><span class="nm t">MA2Shift</span><i class="dv"></i><span class="vl t">0</span></div>
<div class="row g" style="top:220px"><svg class="ic" width="16" height="16"><use href="#i-ab"/></svg><span class="nm t">note6</span><i class="dv"></i><span class="dash"></span></div>
<div class="row " style="top:240px"><svg class="ic" width="16" height="16"><use href="#i-ab"/></svg><span class="nm t">note7</span><i class="dv"></i><span class="vl t">Arrow Type</span></div>
<div class="row g" style="top:260px"><svg class="ic" width="16" height="16"><use href="#i-ab"/></svg><span class="nm t">note8</span><i class="dv"></i><span class="vl t">0=Thick, 1=Thin, 2=Hollow, 3=Round</span></div>
<div class="row " style="top:280px"><svg class="ic" width="16" height="16"><use href="#i-ab"/></svg><span class="nm t">note9</span><i class="dv"></i><span class="vl t">4=Fractal, 5=Diagonal Thin</span></div>
<div class="row g" style="top:300px"><svg class="ic" width="16" height="16"><use href="#i-ab"/></svg><span class="nm t">note10</span><i class="dv"></i><span class="vl t">6=Diagonal Thick, 7=Diagonal Hollow</span></div>
<div class="row " style="top:320px"><svg class="ic" width="16" height="16"><use href="#i-ab"/></svg><span class="nm t">note11</span><i class="dv"></i><span class="vl t">8=Thumb, 9=Finger</span></div>
<div class="row g" style="top:340px"><svg class="ic" width="16" height="16"><use href="#i-n"/></svg><span class="nm t">ArrowType</span><i class="dv"></i><span class="vl t">2</span></div>
<div class="row " style="top:360px"><svg class="ic" width="16" height="16"><use href="#i-ab"/></svg><span class="nm t">note12</span><i class="dv"></i><span class="dash"></span></div>
<div class="row g" style="top:380px"><svg class="ic" width="16" height="16"><use href="#i-ab"/></svg><span class="nm t">note13</span><i class="dv"></i><span class="vl t">turn on Alert = true; turn off = false</span></div>
<div class="row " style="top:400px"><svg class="ic" width="16" height="16"><use href="#i-b"/></svg><span class="nm t">AlertOn</span><i class="dv"></i><span class="vl t">true</span></div>
<div class="row g" style="top:420px"><svg class="ic" width="16" height="16"><use href="#i-ab"/></svg><span class="nm t">note14</span><i class="dv"></i><span class="dash"></span></div>
<div class="row " style="top:440px"><svg class="ic" width="16" height="16"><use href="#i-ab"/></svg><span class="nm t">note15</span><i class="dv"></i><span class="vl t">send Email Alert = true; turn off = false</span></div>
<div class="row g" style="top:460px"><svg class="ic" width="16" height="16"><use href="#i-b"/></svg><span class="nm t">SendAnEmail</span><i class="dv"></i><span class="vl t">true</span></div>
  </div>
 </div>
 <svg class="abs" style="left:681px;top:624px" width="11" height="11" viewBox="0 0 11 11"><g fill="#b8b8b8"><rect x="7" y="1" width="2" height="2"/><rect x="4" y="4" width="2" height="2"/><rect x="7" y="4" width="2" height="2"/><rect x="1" y="7" width="2" height="2"/><rect x="4" y="7" width="2" height="2"/><rect x="7" y="7" width="2" height="2"/></g><g fill="#fff"><rect x="8" y="2" width="1" height="1"/><rect x="5" y="5" width="1" height="1"/><rect x="8" y="5" width="1" height="1"/><rect x="2" y="8" width="1" height="1"/><rect x="5" y="8" width="1" height="1"/><rect x="8" y="8" width="1" height="1"/></g></svg>
 <div class="btn" style="left:572px;top:531px;width:103px"><span class="tb">Načíst</span></div>
 <div class="btn" style="left:572px;top:564px;width:103px"><span class="tb">Uložit</span></div>
 <div class="btn" style="left:448px;top:605px;width:73px"><span class="tb">OK</span></div>
 <div class="btn" style="left:529px;top:605px;width:73px"><span class="tb">Storno</span></div>
 <div class="btn" style="left:610px;top:605px;width:73px"><span class="tb">Obnovit</span></div>
</div>
</div>
</body></html>
